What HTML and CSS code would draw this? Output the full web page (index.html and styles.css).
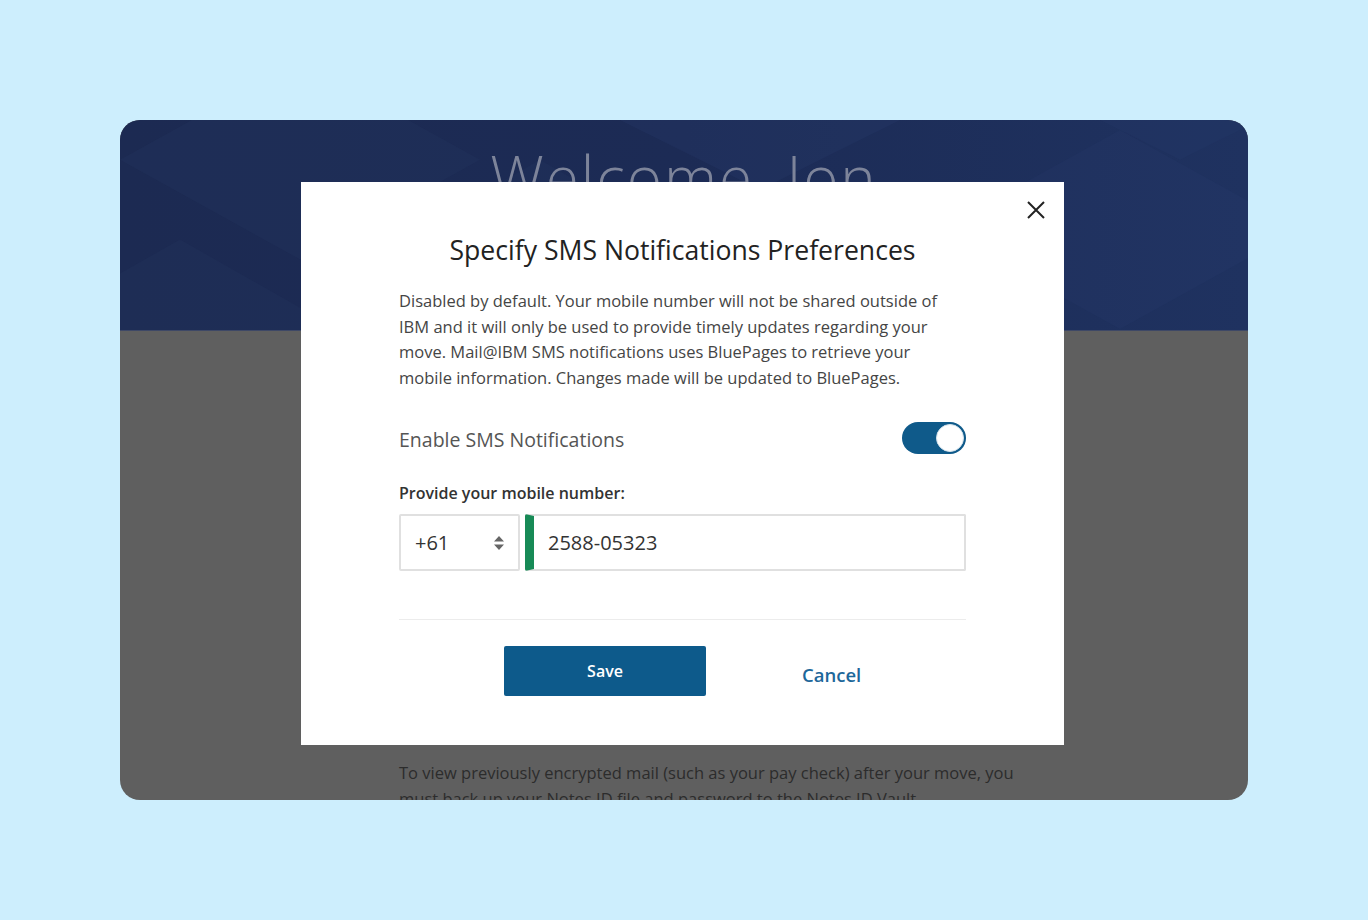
FILE: index.html
```html
<!DOCTYPE html>
<html lang="en">
<head>
<meta charset="utf-8">
<title>SMS Notifications</title>
<link rel="stylesheet" href="styles.css">
</head>
<body>
<div class="frame">
  <header class="hero">
    <svg class="hero-pattern" viewBox="0 0 1128 211" preserveAspectRatio="none" aria-hidden="true">
      <polygon points="0,40 180,-60 360,40 180,140" fill="#2a3b66" opacity="0.22"/>
      <polygon points="230,150 420,40 610,150 420,260" fill="#2a3b66" opacity="0.2"/>
      <polygon points="500,0 640,-70 780,0 640,70" fill="#2f4170" opacity="0.22"/>
      <polygon points="820,110 1000,10 1180,110 1000,210" fill="#2a3d6c" opacity="0.22"/>
      <polygon points="900,-40 1060,-120 1220,-40 1060,40" fill="#2a3d6c" opacity="0.2"/>
      <polygon points="-80,200 60,120 200,200 60,280" fill="#23345e" opacity="0.3"/>
    </svg>
    <h1 class="hero-title">Welcome, Jon</h1>
  </header>
  <main class="page">
    <p class="page-text">To view previously encrypted mail (such as your pay check) after your move, you must back up your Notes ID file and password to the Notes ID Vault.</p>
  </main>

  <div class="modal" role="dialog" aria-labelledby="modal-title">
    <button class="close" aria-label="Close">
      <svg viewBox="0 0 20 20" width="20" height="20"><path d="M2 2 L18 18 M18 2 L2 18" stroke="#222" stroke-width="2" fill="none"/></svg>
    </button>
    <h2 class="modal-title" id="modal-title">Specify SMS Notifications Preferences</h2>
    <p class="modal-text">Disabled by default. Your mobile number will not be shared outside of IBM and it will only be used to provide timely updates regarding your move. Mail@IBM SMS notifications uses BluePages to retrieve your mobile information. Changes made will be updated to BluePages.</p>
    <div class="toggle-row">
      <span class="toggle-label">Enable SMS Notifications</span>
      <span class="toggle"><span class="knob"></span></span>
    </div>
    <div class="field-label">Provide your mobile number:</div>
    <div class="phone-row">
      <div class="select">
        <span>+61</span>
        <svg viewBox="0 0 12 18" width="12" height="18"><path d="M6 2 L11 7.5 H1 Z M6 16 L11 10.5 H1 Z" fill="#666"/></svg>
      </div>
      <div class="phone-input">2588-05323</div>
    </div>
    <div class="divider"></div>
    <div class="actions">
      <button class="btn-save">Save</button>
      <button class="btn-cancel">Cancel</button>
    </div>
  </div>
</div>
</body>
</html>
```
FILE: styles.css
```css
* { box-sizing: border-box; }
html, body { margin: 0; padding: 0; }
body {
  background: #cdeefd;
  font-family: "Open Sans", "Noto Sans", sans-serif;
  width: 1368px;
  height: 920px;
  padding-top: 120px;
}
.frame {
  position: relative;
  width: 1128px;
  height: 680px;
  margin: 0 auto;
  border-radius: 20px;
  overflow: hidden;
  background: #5f5f5f;
  display: flex;
  flex-direction: column;
}
.hero {
  position: relative;
  height: 211px;
  flex: none;
  background: linear-gradient(90deg, #1c2a52 0%, #1c2b55 50%, #1f3260 100%);
  border-bottom: 1px solid #3e4866;
  overflow: hidden;
}
.hero-pattern {
  position: absolute;
  inset: 0;
  width: 100%;
  height: 100%;
}
.hero-title {
  position: relative;
  margin: 19px 0 0;
  text-align: center;
  font-family: "Open Sans", sans-serif;
  font-weight: 300;
  font-size: 60px;
  line-height: 76px;
  color: #7d849a;
  letter-spacing: 2px;
  padding-left: 0;
}
.page {
  flex: 1;
  padding: 429px 0 0 279px;
}
.page-text {
  margin: 0;
  width: 640px;
  font-size: 16.5px;
  line-height: 26px;
  color: #2c2c2c;
}
.modal {
  position: absolute;
  left: 181px;
  top: 62px;
  width: 763px;
  height: 563px;
  background: #fff;
  padding: 52px 98px 0;
}
.close {
  position: absolute;
  top: 12px;
  right: 12px;
  width: 32px;
  height: 32px;
  border: 0;
  background: none;
  padding: 6px;
  cursor: pointer;
}
.close svg { display: block; width: 20px; height: 20px; }
.modal-title {
  margin: 0;
  text-align: center;
  font-weight: 400;
  font-size: 26.6px;
  line-height: 32px;
  color: #222;
}
.modal-text {
  margin: 22px 0 0;
  max-width: 550px;
  font-size: 16.5px;
  line-height: 25.5px;
  color: #454545;
}
.toggle-row {
  margin-top: 32px;
  display: flex;
  align-items: center;
  justify-content: space-between;
  height: 32px;
}
.toggle-label {
  font-size: 19.5px;
  color: #555;
  padding-top: 3px;
}
.toggle {
  width: 64px;
  height: 32px;
  border-radius: 16px;
  background: #0f5a8a;
  display: flex;
  align-items: center;
  justify-content: flex-end;
  padding-right: 2px;
}
.knob {
  width: 28px;
  height: 28px;
  border-radius: 50%;
  background: #fff;
  border: 1px solid #d5e3ec;
}
.field-label {
  margin-top: 29px;
  font-size: 16px;
  font-weight: 600;
  line-height: 20px;
  color: #333;
}
.phone-row {
  margin-top: 11px;
  display: flex;
  gap: 5px;
  height: 57px;
}
.select {
  width: 121px;
  border: 2px solid #e0e0e0;
  border-radius: 2px;
  display: flex;
  align-items: center;
  justify-content: space-between;
  padding: 0 13px 0 14px;
  font-size: 20px;
  color: #333;
}
.phone-input {
  flex: 1;
  border: 2px solid #e0e0e0;
  border-left: 9px solid #178a56;
  border-radius: 2px;
  display: flex;
  align-items: center;
  padding-left: 14px;
  font-size: 20px;
  color: #333;
}
.divider {
  margin-top: 48px;
  height: 1px;
  background: #ececec;
}
.actions {
  margin-top: 26px;
  display: flex;
  align-items: flex-start;
  padding-left: 105px;
}
.btn-save {
  width: 202px;
  height: 50px;
  border: 0;
  border-radius: 2px;
  background: #0d5a8b;
  color: #fff;
  font-family: inherit;
  font-size: 16px;
  font-weight: 600;
  padding-bottom: 2px;
}
.btn-cancel {
  margin-left: 96px;
  margin-top: 13px;
  border: 0;
  background: none;
  color: #1d679a;
  font-family: inherit;
  font-size: 18.5px;
  font-weight: 600;
  padding: 0;
  line-height: 32px;
}
```
